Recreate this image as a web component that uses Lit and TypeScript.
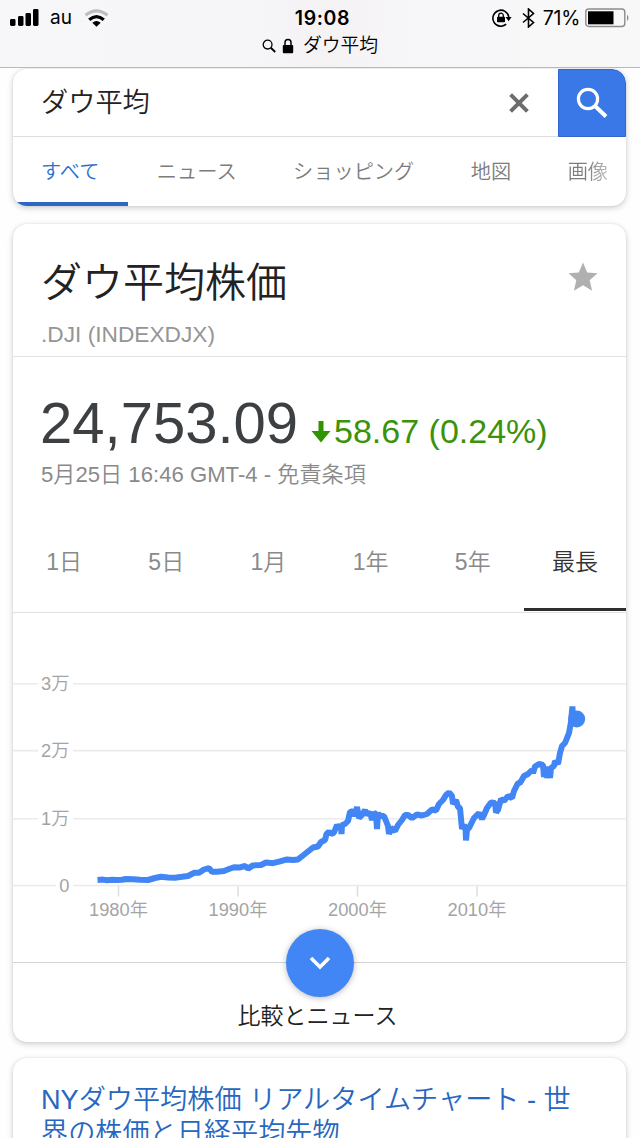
import { LitElement, html, css, svg } from "lit";
import { customElement } from "lit/decorators.js";
import { classMap } from "lit/directives/class-map.js";

// Index history as chart coordinates, oldest first.
const SERIES: [number, number][] = [
  [97.5, 880], [103, 879.6], [107, 880.2], [112, 879.7], [117, 880], [122, 879.8], [126, 879], [133, 879.2], [140, 879.8], [148, 880],
  [155, 878], [161, 876.8], [168, 877.4], [175, 877.7], [182, 876.8], [188, 876], [194, 872.8], [199, 872.8], [204, 869.5], [209, 868],
  [212, 871.8], [217, 871.8], [224, 871], [229, 869], [234, 867.2], [240, 867.4], [245, 866], [248, 868.6], [253, 865.4], [261, 865],
  [266, 862.5], [273, 863.2], [280, 861.4], [287, 859.4], [293, 860], [298, 859.4], [303, 855.5], [308, 851.5], [313, 847.5], [318, 846.5],
  [321, 842], [325, 840], [326.5, 834], [329, 831.5], [331, 834], [334, 832.5], [337, 825], [339, 828], [341, 825], [341.5, 834], [342, 825], [345, 824], [348, 821], [350, 812],
  [353, 811], [355, 816], [357, 807], [359, 818], [362, 815], [365, 810], [367, 815], [370, 812], [372, 820], [374, 813], [376, 814], [377, 829], [378, 814],
  [381, 816], [384, 816], [386, 821], [388, 826], [389, 834], [391, 828], [395, 831], [398, 825], [402, 820], [405, 815], [408, 815], [412, 818], [417, 814.5],
  [422, 815.5], [427, 814], [432, 809.5], [436, 810.5], [439, 804], [443, 800], [446, 795], [449, 792.5], [452, 796], [453, 804], [456, 800],
  [458, 807], [460, 808], [462, 829], [464, 825], [465.5, 828], [466, 840.5], [467, 830], [469, 828], [471, 824], [474, 818], [479, 813], [482, 819], [484, 815],
  [487, 808], [491, 802.5], [495, 803], [496, 812.5], [498, 810], [501, 799], [504, 801], [508, 796], [512, 798], [514, 791], [518, 783],
  [520, 783], [524, 776], [528, 774], [532, 770], [533, 773], [535, 766.5], [539, 764], [543, 765], [544, 777], [546, 766.5],
  [547, 778], [549, 767], [550, 778], [551, 768], [554, 766], [555, 761], [558, 764], [560, 753], [562, 746], [565, 743], [567, 738], [569, 733],
  [571, 722], [572.4, 706.5], [573, 719],
];

const CJK = css`"Liberation Sans", "Noto Sans CJK JP", sans-serif`;

@customElement("status-bar")
class StatusBar extends LitElement {
  static styles = css`
    :host { display: block; height: 67px; box-sizing: content-box; border-bottom: 1px solid #b9b9bb;
      background: linear-gradient(90deg, #f7f7f9, #f6f6f9 38%, #f5f2f4 50%, #f7f6f8 65%, #f8f8f9); color: #000;
      font-family: Inter, "Noto Sans CJK JP", sans-serif; }
    .row { display: grid; grid-template-columns: 1fr auto 1fr; height: 35px; align-items: center; }
    .left { display: flex; align-items: center; padding-left: 10px; font-size: 18.5px; }
    .carrier { margin: 0 12px 0 11px; font-size: 19px; }
    .time { font-size: 19.5px; font-weight: 600; letter-spacing: .6px; padding-left: 5px; }
    .right { display: flex; align-items: center; justify-content: flex-end; padding-right: 10px; font-size: 19.5px; }
    .pct { margin: 0 5px 0 8px; letter-spacing: -.3px; }
    .bt { margin-left: 10px; }
    .addr { display: flex; justify-content: center; align-items: center; height: 22px; font-size: 18.8px; line-height: 26px; font-weight: 350; }
    .addr span { height: 26px; }
    .lock { margin: 0 9px 0 6px; }
    svg { display: block; }
  `;
  render() {
    return html`
      <div class="row">
        <div class="left">
          <svg width="29" height="18" viewBox="0 0 29 18"><rect x="0" y="10" width="5.5" height="7" rx="1.4"/><rect x="8" y="7" width="5.5" height="10" rx="1.4"/><rect x="15.5" y="4" width="5.5" height="13" rx="1.4"/><rect x="23" y="0" width="5.5" height="17" rx="1.4"/></svg>
          <span class="carrier">au</span>
          <svg width="25" height="18" viewBox="0 0 25 18" fill="none"><path d="M1.5 6.2Q12.5-2.6 23.5 6.2" stroke="#bdbdc0" stroke-width="3.2"/><path d="M5.2 10.8Q12.5 4.4 19.8 10.8" stroke="#000" stroke-width="3.2"/><path d="M8.3 13.8Q12.5 10.2 16.7 13.8L12.5 17.8Z" fill="#000"/></svg>
        </div>
        <div class="time">19:08</div>
        <div class="right">
          <svg width="20" height="18" viewBox="0 0 20 18"><path d="M14.2 15.2A8 8 0 1 1 16.8 8" fill="none" stroke="#000" stroke-width="1.6"/><path d="M13.6 8h6l-3 4.3Z"/><rect x="5" y="7.8" width="8" height="5.4" rx=".8"/><path d="M6.7 8V6.5a2.3 2.3 0 0 1 4.6 0V8" fill="none" stroke="#000" stroke-width="1.3"/></svg>
          <svg class="bt" width="13" height="20" viewBox="0 0 13 20"><path d="M1 5.5l10.5 9L6.5 19V1l5 4.5L1 14.5" fill="none" stroke="#000" stroke-width="1.6"/></svg>
          <span class="pct">71%</span>
          <svg width="45" height="20" viewBox="0 0 45 20"><rect x=".8" y="1" width="39" height="17.5" rx="3" fill="none" stroke="#8c8c8e" stroke-width="1.4"/><rect x="3" y="3.3" width="25.5" height="13"/><path d="M42 6.5q3 3.3 0 6.6Z" fill="#8c8c8e"/></svg>
        </div>
      </div>
      <div class="addr">
        <svg width="14" height="14" viewBox="0 0 14 14" fill="none" stroke="#000"><circle cx="5.6" cy="5.6" r="4.4" stroke-width="1.3"/><path d="M8.8 8.8l4.4 4.2" stroke-width="1.9"/></svg>
        <svg class="lock" width="12" height="16" viewBox="0 0 12 16"><rect x=".8" y="7" width="10.4" height="8.2" rx="1"/><path d="M3 7.5V4.6a3 3 0 0 1 6 0V7.5" fill="none" stroke="#000" stroke-width="1.5"/></svg>
        <span>ダウ平均</span>
      </div>`;
  }
}

@customElement("search-header")
class SearchHeader extends LitElement {
  static styles = css`
    :host { display: block; margin: 1px 14px 0 13px; height: 137px; border-radius: 14px; background: #fff; overflow: hidden;
      font-family: ${CJK}; font-weight: 350; }
    .box { display: flex; align-items: center; height: 67px; border-bottom: 1px solid #dedede; }
    .query { flex: 1; padding-left: 28px; font-size: 27.2px; line-height: 40px; color: #222; }
    .clear { margin-right: 29px; }
    .go { width: 68.5px; height: 68px; background: #3b78e7; align-self: flex-start; box-sizing: border-box; border: 1px solid #3365d3;
      border-radius: 0 14px 0 0; display: flex; align-items: center; justify-content: center; }
    .tabs { display: flex; gap: 56.5px; padding-left: 28px; height: 69px; font-size: 20.2px; line-height: 70px; color: #7c7c7c; white-space: nowrap; }
    .tab.on { color: #2a70d0; margin-left: -28px; padding: 0 28.5px 0 28px; margin-right: -27.5px; box-sizing: border-box; height: 69px; border-bottom: 4px solid #2d66c3; }
    .fade { background: linear-gradient(90deg, #7c7c7c 45%, #c0c0c0); background-clip: text; -webkit-background-clip: text; color: transparent; }
    svg { display: block; }
  `;
  render() {
    const tabs = ["すべて", "ニュース", "ショッピング", "地図", "画像"];
    return html`
      <div class="box">
        <span class="query">ダウ平均</span>
        <svg class="clear" width="20" height="20" viewBox="0 0 20 20"><path d="M1.6 1.6l16.8 16.8M18.4 1.6L1.6 18.4" stroke="#6d6d6d" stroke-width="4"/></svg>
        <div class="go"><svg width="32" height="32" viewBox="0 0 32 32" fill="none" stroke="#fff"><circle cx="12" cy="12" r="9.6" stroke-width="3.2"/><path d="M19 19l11 10.5" stroke-width="4"/></svg></div>
      </div>
      <div class="tabs">
        ${tabs.map((t, i) => html`<span class=${classMap({ tab: true, on: i === 0, fade: i === 4 })}>${t}</span>`)}
      </div>`;
  }
}

@customElement("stock-chart")
class StockChart extends LitElement {
  static styles = css`
    :host { display: block; }
    svg { display: block; font-family: ${CJK}; font-size: 18.3px; font-weight: 350; }
    .grid { stroke: #ebebeb; stroke-width: 1.6; }
    .tick { stroke: #dcdcdc; stroke-width: 1.4; }
    .label { fill: #a4a4a4; }
    .line { fill: none; stroke: #4285f4; stroke-width: 6; stroke-linejoin: bevel; }
  `;
  render() {
    const rows: [number, string, number][] = [[683.8, "3万", 38], [750.6, "2万", 38], [818.7, "1万", 38], [885.5, "0", 56]];
    const years: [number, string][] = [[118.5, "1980年"], [238, "1990年"], [357.5, "2000年"], [477, "2010年"]];
    return html`<svg width="613" height="349" viewBox="13 613 613 349">
      ${rows.map(([y, t, x]) => svg`
        <path class="grid" d="M13 ${y}H${x}M73 ${y}H627"/>
        <text class="label" x="69.5" y=${y + 6.6} text-anchor="end">${t}</text>`)}
      ${years.map(([x, t]) => svg`
        <path class="tick" d="M${x} 886V896.5"/>
        <text class="label" x=${x} y="916" text-anchor="middle">${t}</text>`)}
      <polyline class="line" points=${SERIES.map((p) => p.join(",")).join(" ")}/>
      <circle cx="576.7" cy="719" r="8.5" fill="#4285f4"/>
    </svg>`;
  }
}

@customElement("stock-card")
class StockCard extends LitElement {
  static styles = css`
    :host { display: block; margin: 18px 14px 0 13px; height: 818px; border-radius: 14px; background: #fff;
      font-family: ${CJK}; font-weight: 350; }
    .head { display: flex; justify-content: space-between; height: 132px; border-bottom: 1px solid #e2e2e2; padding: 0 28px 0 28px; }
    .name { font-size: 41px; line-height: 60px; padding-top: 29px; color: #222; }
    .sym { font-size: 22.7px; line-height: 28px; padding-top: 7px; color: #959595; }
    .star { margin-top: 38px; }
    .quote { display: flex; align-items: baseline; height: 95px; padding: 0 27.5px 0 27px; line-height: 132px; color: #3c4043; white-space: nowrap; }
    .price { font-size: 58px; }
    .arrow { display: inline-block; margin: 0 3px 0 13px; }
    .change { font-size: 34px; color: #3a9308; }
    .when { padding-left: 28px; font-size: 22.15px; line-height: 46px; height: 44px; color: #8a8a8a; }
    .ranges { display: grid; grid-template-columns: repeat(6, 1fr); margin-top: 16px; height: 100px; border-bottom: 1px solid #e0e0e0; }
    .range { text-align: center; font-size: 23px; line-height: 101px; color: #8a8a8a; height: 96px; }
    .range.on { color: #333; border-bottom: 3.5px solid #2e2e2e; }
    .more { border-top: 1.5px solid #d4d4d4; display: flex; flex-direction: column; align-items: center; color: #222; font-size: 23px; line-height: 36px; }
    .fab { width: 68px; height: 68px; border-radius: 50%; background: #4285f4; box-shadow: 0 1px 6px rgba(0,0,0,.28);
      display: flex; align-items: center; justify-content: center; z-index: 1; margin: -34px 0 1px 1px; }
    .more span { margin-right: 4px; }
    .fab svg, .star { display: block; }
  `;
  render() {
    const ranges = ["1日", "5日", "1月", "1年", "5年", "最長"];
    return html`
      <div class="head">
        <div><div class="name">ダウ平均株価</div><div class="sym">.DJI (INDEXDJX)</div></div>
        <svg class="star" width="30" height="30" viewBox="0 0 30 30"><path fill="#b0b0b0" d="M15 .5l4.2 9.9 10.3.9-7.8 7 2.4 10.4L15 23.2l-9.1 5.5 2.4-10.4-7.8-7 10.3-.9Z"/></svg>
      </div>
      <div class="quote">
        <span class="price">24,753.09</span>
        <svg class="arrow" width="20" height="22" viewBox="0 0 20 22"><path fill="#2f9400" d="M7.5 0h5v10H19.5L10 21.5.5 10H7.5Z"/></svg>
        <span class="change">58.67 (0.24%)</span>
      </div>
      <div class="when">5月25日 16:46 GMT-4 - 免責条項</div>
      <div class="ranges">${ranges.map((r, i) => html`<div class=${classMap({ range: true, on: i === 5 })}>${r}</div>`)}</div>
      <stock-chart></stock-chart>
      <div class="more"><div class="fab"><svg width="22" height="14" viewBox="0 0 22 14"><path d="M2 2l9 9 9-9" fill="none" stroke="#fff" stroke-width="3.6"/></svg></div><span>比較とニュース</span></div>`;
  }
}

@customElement("app-root")
class AppRoot extends LitElement {
  static styles = css`
    :host { display: block; height: 1138px; overflow: hidden; background: #fefefe; }
    search-header, stock-card, .result { box-shadow: 0 2px 6px rgba(0,0,0,.19), 0 0 2px rgba(0,0,0,.1); }
    status-bar { position: relative; z-index: 2; }
    .result { margin: 16px 14px 0 13px; height: 160px; border-radius: 14px; background: #fff; box-sizing: border-box;
      padding: 24.5px 28px; font: 350 27.15px/33.5px ${CJK}; color: #2767c0; white-space: nowrap; }
  `;
  render() {
    return html`
      <status-bar></status-bar>
      <search-header></search-header>
      <stock-card></stock-card>
      <div class="result">NYダウ平均株価 リアルタイムチャート - 世<br>界の株価と日経平均先物</div>`;
  }
}
